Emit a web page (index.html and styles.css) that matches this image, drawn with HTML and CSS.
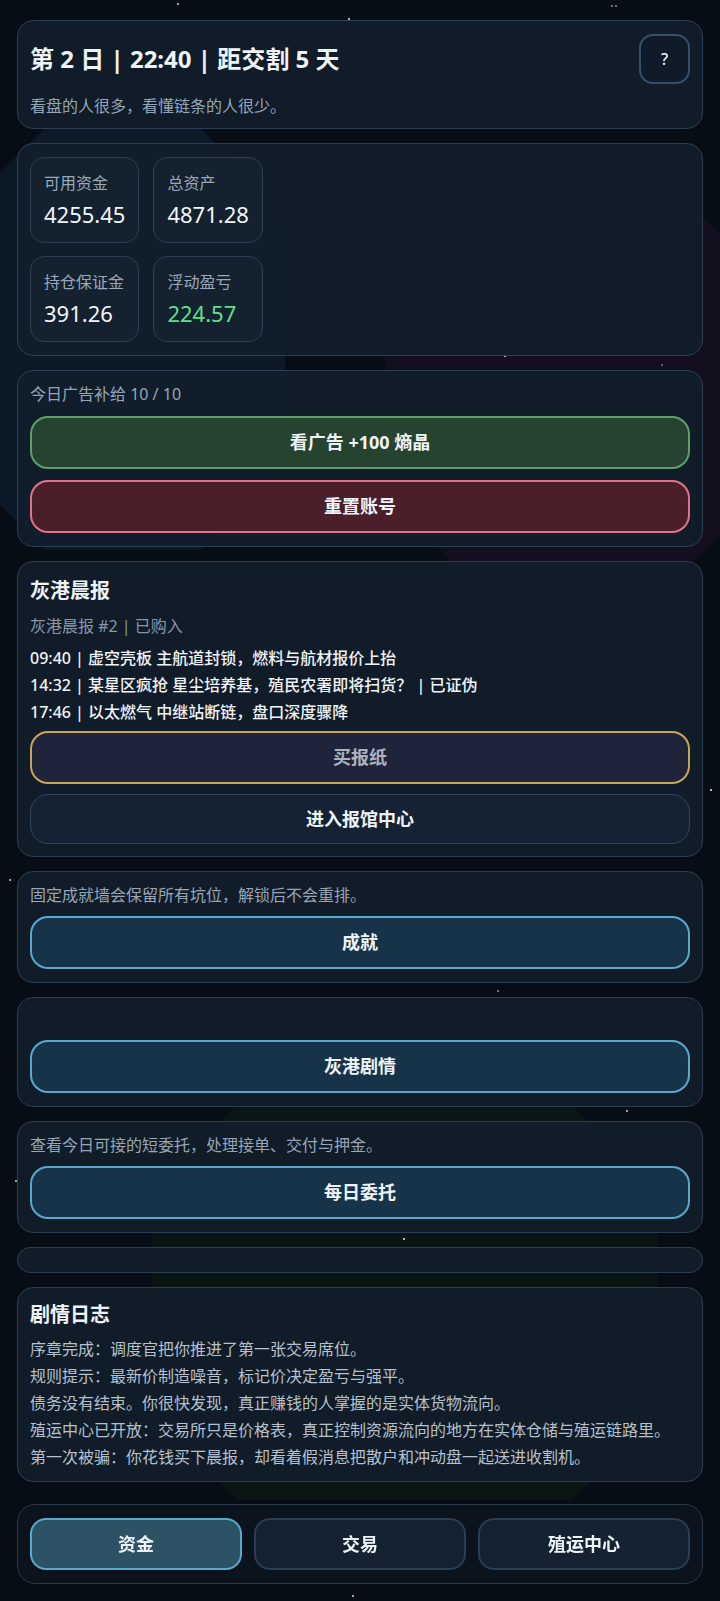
FILE: index.html
```html
<!DOCTYPE html>
<html lang="zh-CN">
<head>
    <meta charset="UTF-8">
    <meta name="viewport" content="width=device-width, initial-scale=1.0">
    <title>灰港</title>
    <link rel="stylesheet" href="styles.css">
</head>
<body>
    <div class="backdrop">
        <div class="shape shape-navy"></div>
        <div class="shape shape-purple"></div>
        <div class="shape shape-green"></div>
        <div class="stars"></div>
    </div>

    <main class="page">
        <section class="card stack head-card">
            <div class="head-row">
                <h1 class="day-title">第 2 日 | 22:40 | 距交割 5 天</h1>
                <button class="help-btn">?</button>
            </div>
            <p class="muted">看盘的人很多，看懂链条的人很少。</p>
        </section>

        <section class="card">
            <div class="stat-grid">
                <div class="stat">
                    <div class="stat-label">可用资金</div>
                    <div class="stat-value">4255.45</div>
                </div>
                <div class="stat">
                    <div class="stat-label">总资产</div>
                    <div class="stat-value">4871.28</div>
                </div>
                <div class="stat">
                    <div class="stat-label">持仓保证金</div>
                    <div class="stat-value">391.26</div>
                </div>
                <div class="stat">
                    <div class="stat-label">浮动盈亏</div>
                    <div class="stat-value up">224.57</div>
                </div>
            </div>
        </section>

        <section class="card stack ad-card">
            <p class="muted">今日广告补给 10 / 10</p>
            <button class="btn btn-green">看广告 +100 熵晶</button>
            <button class="btn btn-red">重置账号</button>
        </section>

        <section class="card stack news-card">
            <h2 class="card-title">灰港晨报</h2>
            <p class="muted sub">灰港晨报 #2 | 已购入</p>
            <ul class="news-list">
                <li>09:40 | 虚空壳板 主航道封锁，燃料与航材报价上抬</li>
                <li>14:32 | 某星区疯抢 星尘培养基，殖民农署即将扫货？ | 已证伪</li>
                <li>17:46 | 以太燃气 中继站断链，盘口深度骤降</li>
            </ul>
            <button class="btn btn-gold">买报纸</button>
            <button class="btn btn-plain">进入报馆中心</button>
        </section>

        <section class="card stack">
            <p class="muted">固定成就墙会保留所有坑位，解锁后不会重排。</p>
            <button class="btn btn-blue">成就</button>
        </section>

        <section class="card stack">
            <p class="muted"></p>
            <button class="btn btn-blue">灰港剧情</button>
        </section>

        <section class="card stack">
            <p class="muted">查看今日可接的短委托，处理接单、交付与押金。</p>
            <button class="btn btn-blue">每日委托</button>
        </section>

        <section class="card card-empty"></section>

        <section class="card stack">
            <h2 class="card-title">剧情日志</h2>
            <ul class="log-list">
                <li>序章完成：调度官把你推进了第一张交易席位。</li>
                <li>规则提示：最新价制造噪音，标记价决定盈亏与强平。</li>
                <li>债务没有结束。你很快发现，真正赚钱的人掌握的是实体货物流向。</li>
                <li>殖运中心已开放：交易所只是价格表，真正控制资源流向的地方在实体仓储与殖运链路里。</li>
                <li>第一次被骗：你花钱买下晨报，却看着假消息把散户和冲动盘一起送进收割机。</li>
            </ul>
        </section>
    </main>

    <nav class="tabbar">
        <button class="tab active">资金</button>
        <button class="tab">交易</button>
        <button class="tab">殖运中心</button>
    </nav>
</body>
</html>
```

FILE: styles.css
```css
body {
    margin: 0;
    min-height: 1601px;
    position: relative;
    background-color: #070d14;
    color: #eef3f8;
    font-family: "Noto Sans", "Noto Sans CJK SC", sans-serif;
    font-size: 16px;
}

/* background decoration */
.backdrop {
    position: absolute;
    inset: 0;
    overflow: hidden;
    z-index: 0;
}
.shape {
    position: absolute;
    clip-path: polygon(85px 0, calc(100% - 85px) 0, 100% 85px, 100% calc(100% - 85px), calc(100% - 85px) 100%, 85px 100%, 0 calc(100% - 85px), 0 85px);
}
.shape-navy {
    left: -40px;
    top: 128px;
    width: 325px;
    height: 422px;
    background-color: #0c1927;
}
.shape-purple {
    left: 385px;
    top: 190px;
    width: 375px;
    height: 390px;
    background-color: #140f1e;
}
.shape-green {
    left: 152px;
    top: 1105px;
    width: 505px;
    height: 395px;
    background-color: #0a1614;
}
.stars {
    position: absolute;
    top: 0;
    left: 0;
    width: 2px;
    height: 2px;
    border-radius: 50%;
    background: transparent;
    box-shadow: 177px 3px #c9d3dd, 348px 18px #dfe7ef, 611px 5px #8e99a6, 615px 5px #8e99a6,
        504px 355px #dfe7ef, 661px 364px #6f7b88, 710px 789px #f0f4f8, 9px 879px #c9d3dd,
        497px 990px #8e99a6, 626px 1110px #c9d3dd, 15px 1180px #c9d3dd, 403px 1238px #f0f4f8,
        352px 1595px #c9d3dd;
}

.page {
    position: relative;
    z-index: 1;
    padding: 20px 17px 120px;
    display: flex;
    flex-direction: column;
    gap: 14px;
}

.card {
    background-color: rgba(17, 29, 42, 0.92);
    border: 1px solid #2c3f52;
    border-radius: 16px;
    padding: 13px 12px;
}
.card-empty {
    padding: 12px;
}
.stack {
    display: flex;
    flex-direction: column;
    gap: 10px;
}

.head-card {
    padding-bottom: 11px;
}
.head-card .muted {
    margin-top: 2px;
}
.head-row {
    display: flex;
    justify-content: space-between;
    align-items: center;
}
.day-title {
    margin: 0;
    font-size: 24px;
    font-weight: 700;
    line-height: 32px;
}
.help-btn {
    width: 51px;
    height: 50px;
    border: 2px solid #35506a;
    border-radius: 14px;
    background-color: #0f1b28;
    color: #eef3f8;
    font-family: inherit;
    font-size: 16px;
    font-weight: 500;
}

.muted {
    margin: 0;
    min-height: 21px;
    line-height: 21px;
    color: #97a6b6;
}
.muted:empty {
    min-height: 19px;
}
.sub {
    color: #8797a9;
}

.card-title {
    margin: 0;
    font-size: 20px;
    font-weight: 700;
    line-height: 28px;
}

.stat-grid {
    display: grid;
    grid-template-columns: repeat(2, max-content);
    gap: 13px 14px;
}
.stat {
    background-color: #14212e;
    border: 1px solid #2d4053;
    border-radius: 14px;
    padding: 14px 13px 13px;
}
.stat-label {
    line-height: 22px;
    color: #9aa9b9;
}
.stat-value {
    margin-top: 5px;
    font-size: 22px;
    line-height: 30px;
    color: #f2f6fa;
}
.stat-value.up {
    color: #5fe08a;
}

.ad-card {
    gap: 11px;
}
.news-card {
    padding-top: 15px;
    padding-bottom: 12px;
}
.news-card .sub {
    margin-top: 1px;
}
.news-card .news-list {
    margin: 1px 0 -2px;
}

.btn {
    display: block;
    width: 100%;
    padding: 12px;
    border: 2px solid;
    border-radius: 18px;
    font-family: inherit;
    font-size: 18px;
    font-weight: 700;
    line-height: 25px;
    color: #eef3f8;
    text-align: center;
    cursor: pointer;
}
.btn-green {
    background-color: #25432f;
    border-color: #5c9f6c;
}
.btn-red {
    background-color: #4b1f2a;
    border-color: #e0728b;
}
.btn-gold {
    background-color: #20243a;
    border-color: #c9a55a;
    color: #a9b3c0;
}
.btn-plain {
    background-color: #132334;
    border: 1px solid #2f4659;
    line-height: 24px;
}
.btn-blue {
    background-color: #16334a;
    border-color: #5ba8cd;
}

.news-list, .log-list {
    list-style: none;
    margin: 0;
    padding: 0;
    display: flex;
    flex-direction: column;
    gap: 6px;
}
.news-list li {
    line-height: 21px;
    font-weight: 500;
    color: #f0f4f8;
}
.log-list li {
    line-height: 21px;
    color: #b6c1cd;
}

.tabbar {
    position: fixed;
    left: 17px;
    right: 17px;
    bottom: 17px;
    z-index: 2;
    display: grid;
    grid-template-columns: repeat(3, 1fr);
    gap: 12px;
    padding: 13px 12px;
    background-color: rgba(12, 20, 29, 0.95);
    border: 1px solid #2a3b4c;
    border-radius: 18px;
}
.tab {
    padding: 12px;
    border: 2px solid #2b3f52;
    border-radius: 16px;
    background-color: #142231;
    color: #eef3f8;
    font-family: inherit;
    font-size: 18px;
    font-weight: 700;
    line-height: 24px;
    cursor: pointer;
}
.tab.active {
    background-color: #2d5266;
    border-color: #5aaad0;
}
```
